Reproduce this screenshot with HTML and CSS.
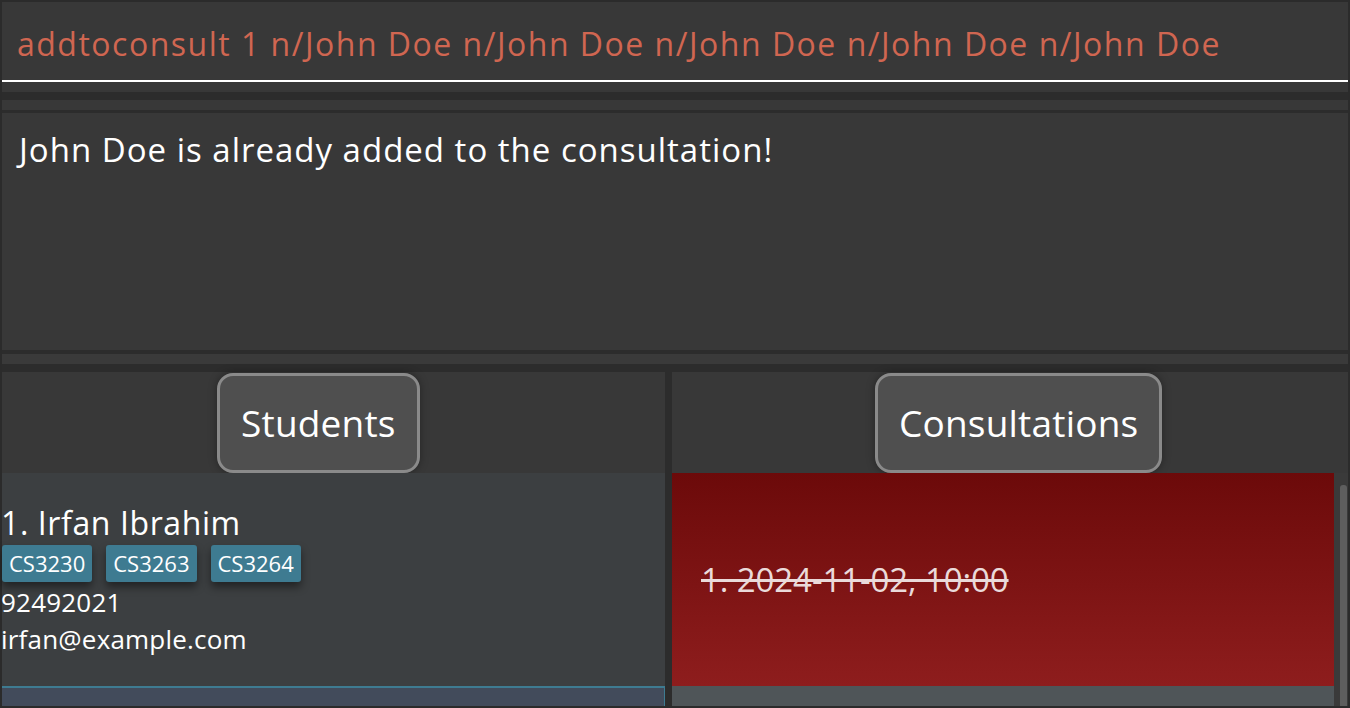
FILE: index.html
```html
<!DOCTYPE html>
<html>
<head>
<meta charset="utf-8">
<link rel="stylesheet" href="styles.css">
</head>
<body>
<div class="app">
  <div class="command">addtoconsult 1 n/John Doe n/John Doe n/John Doe n/John Doe n/John Doe</div>
  <div class="gap-a"></div>
  <div class="sep-a"></div>
  <div class="gap-b"></div>
  <div class="sep-b"></div>
  <div class="result">John Doe is already added to the consultation!</div>
  <div class="sep-c"></div>
  <div class="gap-c"></div>
  <div class="sep-d"></div>
  <div class="lists">
    <div class="panel panel-left">
      <div class="panel-head head-left"><div class="tab">Students</div></div>
      <div class="panel-body body-left">
        <div class="card student">
          <div class="name">1. Irfan Ibrahim</div>
          <div class="tags"><span class="tag">CS3230</span><span class="tag">CS3263</span><span class="tag">CS3264</span></div>
          <div class="line">92492021</div>
          <div class="line">irfan@example.com</div>
        </div>
        <div class="card selected"></div>
      </div>
    </div>
    <div class="divider"></div>
    <div class="panel panel-right">
      <div class="panel-head head-right"><div class="tab">Consultations</div></div>
      <div class="panel-body body-right">
        <div class="right-list">
          <div class="card consult"><span class="consult-text">1. 2024-11-02, 10:00</span></div>
          <div class="card filler"></div>
        </div>
        <div class="track"><div class="thumb"></div></div>
      </div>
    </div>
  </div>
</div>
</body>
</html>
```

FILE: styles.css
```css
html, body {
  margin: 0;
  padding: 0;
  width: 1350px;
  height: 708px;
  overflow: hidden;
  background: #2b2b2b;
  font-family: "Open Sans", "Noto Sans", sans-serif;
}
.app {
  display: flex;
  flex-direction: column;
  height: 708px;
  padding: 2px;
  box-sizing: border-box;
}
.command {
  height: 80px;
  flex: none;
  box-sizing: border-box;
  background: #383838;
  border-bottom: 2px solid #ffffff;
  color: #d06651;
  font-size: 32px;
  letter-spacing: 1.5px;
  line-height: 76px;
  padding: 4px 0 0 15px;
  white-space: nowrap;
  overflow: hidden;
}
.gap-a { height: 10px; flex: none; background: #383838; }
.sep-a { height: 8px; flex: none; background: #2c2c2c; }
.gap-b { height: 10px; flex: none; background: #383838; }
.sep-b { height: 3px; flex: none; background: #2c2c2c; }
.result {
  height: 237px;
  flex: none;
  background: #383838;
  color: #ffffff;
  font-size: 33px;
  letter-spacing: 1px;
  padding: 17px 17px 0 17px;
  box-sizing: border-box;
  line-height: 40px;
}
.sep-c { height: 4px; flex: none; background: #2c2c2c; }
.gap-c { height: 10px; flex: none; background: #3a3a3a; }
.sep-d { height: 8px; flex: none; background: #2c2c2c; }
.lists {
  flex: 1;
  display: flex;
  min-height: 0;
}
.panel {
  display: flex;
  flex-direction: column;
  background: #383838;
}
.panel-left { width: 663px; }
.panel-right { flex: 1; }
.divider { width: 7px; background: #2c2c2c; }
.panel-head {
  height: 101px;
  flex: none;
  display: flex;
  align-items: flex-start;
  padding-top: 1px;
  box-sizing: border-box;
}
.head-left { padding-left: 215px; }
.head-right { padding-left: 203px; }
.tab {
  height: 100px;
  box-sizing: border-box;
  border: 3px solid #8a8a8a;
  border-radius: 16px;
  background: #4f4f4f;
  color: #ffffff;
  font-size: 37px;
  letter-spacing: 0.2px;
  display: flex;
  align-items: center;
  padding: 0 21px 2px 21px;
  box-shadow: 0 0 8px rgba(0,0,0,0.35);
}
.panel-body {
  flex: 1;
  display: flex;
  flex-direction: column;
  min-height: 0;
}
.body-left { background: #3c3f41; }
.card { box-sizing: border-box; }
.student {
  height: 213px;
  flex: none;
  padding: 30px 0 0 0;
  color: #ffffff;
}
.name {
  font-size: 32px;
  letter-spacing: 0.6px;
  line-height: 40px;
  margin-bottom: 2px;
  margin-left: -1px;
}
.tags {
  display: flex;
  gap: 14px;
  margin-bottom: 2px;
}
.tag {
  background: #3e7b91;
  color: #ffffff;
  font-size: 22px;
  line-height: 37px;
  padding: 0 7px;
  border-radius: 3px;
  box-shadow: 0 5px 8px rgba(0,0,0,0.45);
}
.line {
  font-size: 26px;
  letter-spacing: 0.2px;
  line-height: 37px;
  margin-left: -1px;
}
.selected {
  flex: 1;
  background: #424b5b;
  border-top: 2px solid #3e7b91;
  border-right: 1px solid #3e7b91;
}
.body-right {
  flex-direction: row;
}
.right-list {
  flex: 1;
  display: flex;
  flex-direction: column;
}
.consult {
  height: 213px;
  flex: none;
  background: linear-gradient(#6c0a0a, #8e1d1d);
  display: flex;
  align-items: center;
  padding-left: 29px;
}
.consult-text {
  color: #eadada;
  font-size: 33px;
  letter-spacing: -0.1px;
  text-decoration: line-through;
}
.filler {
  flex: 1;
  background: #4f5558;
}
.track {
  width: 14px;
  background: #3a3a3a;
  padding: 12px 1px 0 6px;
  box-sizing: border-box;
}
.thumb {
  width: 7px;
  height: 100%;
  background: #5e5e5e;
  border-radius: 3px 3px 0 0;
}
```
